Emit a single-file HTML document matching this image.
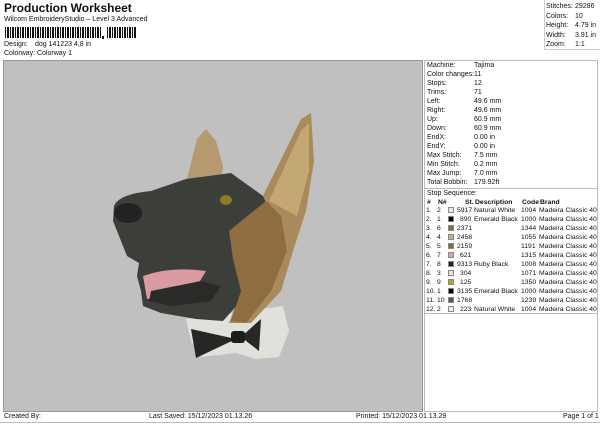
<!DOCTYPE html>
<html><head><style>
*{margin:0;padding:0;box-sizing:border-box}
body{width:600px;height:424px;background:#fff;font-family:"Liberation Sans",sans-serif;font-size:7px;color:#111;position:relative;overflow:hidden}
.a{position:absolute;white-space:nowrap}
#gray{position:absolute;left:3px;top:60px;width:420px;height:352px;background:#c0c0c0;border:1px solid #999}
#rp{position:absolute;left:424px;top:60px;width:174px;height:352px;border:1px solid #bbb;background:#fff}
.r{position:absolute;left:2px;height:9px;line-height:9px;white-space:nowrap;width:170px}
.v{position:absolute;left:47px;white-space:nowrap}
.sw{display:inline-block;width:6px;height:6px;position:absolute;top:1px;border:1px solid #888}
.t{font-size:6.8px}
</style></head><body>
<div class="a" style="left:4px;top:1px;font-size:12px;font-weight:bold">Production Worksheet</div>
<div class="a" style="left:4px;top:16px;font-size:7px">Wilcom EmbroideryStudio – Level 3 Advanced</div>
<svg class="a" style="left:5px;top:27px" width="135" height="12">
<g fill="#111">
<rect x="0" y="0" width="1" height="11"/><rect x="2" y="0" width="2" height="11"/><rect x="5" y="0" width="1" height="11"/><rect x="7" y="0" width="2" height="11"/><rect x="10" y="0" width="1" height="11"/><rect x="12" y="0" width="2" height="11"/><rect x="15" y="0" width="1" height="11"/><rect x="17" y="0" width="2" height="11"/><rect x="20" y="0" width="1" height="11"/><rect x="22" y="0" width="2" height="11"/><rect x="25" y="0" width="1" height="11"/><rect x="27" y="0" width="2" height="11"/><rect x="30" y="0" width="1" height="11"/><rect x="32" y="0" width="2" height="11"/><rect x="35" y="0" width="1" height="11"/><rect x="37" y="0" width="2" height="11"/><rect x="40" y="0" width="1" height="11"/><rect x="42" y="0" width="2" height="11"/><rect x="45" y="0" width="1" height="11"/><rect x="47" y="0" width="2" height="11"/><rect x="50" y="0" width="1" height="11"/><rect x="52" y="0" width="2" height="11"/><rect x="55" y="0" width="1" height="11"/><rect x="57" y="0" width="2" height="11"/><rect x="60" y="0" width="1" height="11"/><rect x="62" y="0" width="2" height="11"/><rect x="65" y="0" width="1" height="11"/><rect x="67" y="0" width="2" height="11"/><rect x="70" y="0" width="1" height="11"/><rect x="72" y="0" width="2" height="11"/><rect x="75" y="0" width="1" height="11"/><rect x="77" y="0" width="2" height="11"/><rect x="80" y="0" width="1" height="11"/><rect x="82" y="0" width="2" height="11"/><rect x="85" y="0" width="1" height="11"/><rect x="87" y="0" width="2" height="11"/><rect x="90" y="0" width="1" height="11"/><rect x="92" y="0" width="2" height="11"/><rect x="95" y="0" width="1" height="11"/><rect x="97" y="9" width="2" height="3"/><rect x="102" y="0" width="1" height="11"/><rect x="104" y="0" width="2" height="11"/><rect x="107" y="0" width="1" height="11"/><rect x="109" y="0" width="2" height="11"/><rect x="112" y="0" width="1" height="11"/><rect x="114" y="0" width="2" height="11"/><rect x="117" y="0" width="1" height="11"/><rect x="119" y="0" width="2" height="11"/><rect x="122" y="0" width="1" height="11"/><rect x="124" y="0" width="2" height="11"/><rect x="127" y="0" width="1" height="11"/><rect x="129" y="0" width="2" height="11"/></g></svg>
<div class="a" style="left:4px;top:41px">Design:</div><div class="a" style="left:35px;top:41px">dog 141223 4,8 in</div>
<div class="a" style="left:4px;top:50px">Colorway:</div><div class="a" style="left:37px;top:50px">Colorway 1</div>
<div class="a" style="left:544px;top:0;width:56px;height:50px;border-left:1px solid #ccc;border-bottom:1px solid #ccc"></div>
<div class="a" style="left:546px;top:2px;line-height:9.5px">Stitches:<br>Colors:<br>Height:<br>Width:<br>Zoom:</div>
<div class="a" style="left:575px;top:2px;line-height:9.5px">29286<br>10<br>4.79 in<br>3.91 in<br>1:1</div>
<div id="gray">
<svg width="420" height="352" viewBox="3 60 420 352" style="position:absolute;left:0;top:0">
<path d="M185 318 L282 305 L288 330 L278 356 L255 358 L235 352 L200 356 L190 340Z" fill="#dfe2da"/>
<path d="M262 195 L300 118 L310 112 L313 160 L305 210 L292 250 L280 290 L250 322 L228 322 L240 290Z" fill="#a98a5a"/>
<path d="M268 200 L300 130 L308 122 L308 170 L296 215Z" fill="#c4a874"/>
<path d="M186 178 L196 138 L205 128 L215 140 L222 165 L220 182Z" fill="#b49a6e"/>
<path d="M113 205 Q118 193 150 190 L185 178 L230 172 L262 195 L275 225 L262 250 L250 280 L240 300 L222 320 L195 318 L160 312 L142 305 L140 290 L136 275 L138 262 L126 255 L118 235 L112 220Z" fill="#3c3e3a"/>
<path d="M228 230 L265 200 L280 215 L286 250 L270 290 L245 322 L230 320 L240 290 L232 258Z" fill="#8f6d40"/>
<ellipse cx="127" cy="212" rx="14" ry="10" fill="#222"/>
<ellipse cx="225" cy="199" rx="6" ry="5" fill="#8b7b2a"/>
<path d="M142 275 Q170 265 205 270 L196 285 Q170 295 146 298Z" fill="#d99aa2"/>
<path d="M150 290 L200 280 L220 285 L210 300 L170 305 L148 300Z" fill="#2a2b28"/>
<path d="M190 328 L235 338 L195 357Z M260 318 L240 336 L258 350Z" fill="#272826"/>
<rect x="230" y="330" width="14" height="12" rx="3" fill="#1d1e1c"/>
</svg>
</div>
<div id="rp">
<div class="r" style="top:0">Machine:<span class="v">Tajima</span></div>
<div class="r" style="top:9px">Color changes:<span class="v">11</span></div>
<div class="r" style="top:18px">Stops:<span class="v">12</span></div>
<div class="r" style="top:27px">Trims:<span class="v">71</span></div>
<div class="r" style="top:36px">Left:<span class="v">49.6 mm</span></div>
<div class="r" style="top:45px">Right:<span class="v">49.6 mm</span></div>
<div class="r" style="top:54px">Up:<span class="v">60.9 mm</span></div>
<div class="r" style="top:63px">Down:<span class="v">60.9 mm</span></div>
<div class="r" style="top:72px">EndX:<span class="v">0.00 in</span></div>
<div class="r" style="top:81px">EndY:<span class="v">0.00 in</span></div>
<div class="r" style="top:90px">Max Stitch:<span class="v">7.5 mm</span></div>
<div class="r" style="top:99px">Min Stitch:<span class="v">0.2 mm</span></div>
<div class="r" style="top:108px">Max Jump:<span class="v">7.0 mm</span></div>
<div class="r" style="top:117px">Total Bobbin:<span class="v">179.92ft</span></div>
<div style="position:absolute;left:0;top:127px;width:172px;border-top:1px solid #bbb"></div>
<div class="r" style="top:128px">Stop Sequence:</div>
<div class="r t" style="top:137px;font-weight:bold;text-decoration:underline"><span class="a" style="left:0">#</span><span class="a" style="left:11px">N#</span><span class="a" style="left:38px">St.</span><span class="a" style="left:48px">Description</span><span class="a" style="left:95px">Code</span><span class="a" style="left:113px">Brand</span></div>
<div style="position:absolute;left:0;top:252px;width:172px;border-top:1px solid #bbb"></div>
</div>
<div class="a" style="left:4px;top:413px">Created By:</div>
<div class="a" style="left:149px;top:413px">Last Saved: 15/12/2023 01.13.26</div>
<div class="a" style="left:356px;top:413px">Printed: 15/12/2023 01.13.29</div>
<div class="a" style="left:563px;top:413px">Page 1 of 1</div>
<div class="a" style="left:0;top:422px;width:600px;border-top:1px solid #bbb"></div>
<div class="t" style="position:absolute;left:426px;top:206px;width:172px">
<div class="r" style="left:0;top:0"><span class="a" style="left:0">1.</span><span class="a" style="left:11px">2</span><i class="sw" style="left:22px;background:#ececec"></i><span class="a" style="left:31px">5917</span><span class="a" style="left:48px">Natural White</span><span class="a" style="left:95px">1004</span><span class="a" style="left:113px">Madeira Classic 40</span></div>
<div class="r" style="left:0;top:9px"><span class="a" style="left:0">2.</span><span class="a" style="left:11px">1</span><i class="sw" style="left:22px;background:#000"></i><span class="a" style="left:34px">890</span><span class="a" style="left:48px">Emerald Black</span><span class="a" style="left:95px">1000</span><span class="a" style="left:113px">Madeira Classic 40</span></div>
<div class="r" style="left:0;top:18px"><span class="a" style="left:0">3.</span><span class="a" style="left:11px">6</span><i class="sw" style="left:22px;background:#8a6548"></i><span class="a" style="left:31px">2371</span><span class="a" style="left:95px">1344</span><span class="a" style="left:113px">Madeira Classic 40</span></div>
<div class="r" style="left:0;top:27px"><span class="a" style="left:0">4.</span><span class="a" style="left:11px">4</span><i class="sw" style="left:22px;background:#d8aa84"></i><span class="a" style="left:31px">2458</span><span class="a" style="left:95px">1055</span><span class="a" style="left:113px">Madeira Classic 40</span></div>
<div class="r" style="left:0;top:36px"><span class="a" style="left:0">5.</span><span class="a" style="left:11px">5</span><i class="sw" style="left:22px;background:#8d6a2d"></i><span class="a" style="left:31px">2159</span><span class="a" style="left:95px">1191</span><span class="a" style="left:113px">Madeira Classic 40</span></div>
<div class="r" style="left:0;top:45px"><span class="a" style="left:0">6.</span><span class="a" style="left:11px">7</span><i class="sw" style="left:22px;background:#e3a0ad"></i><span class="a" style="left:34px">621</span><span class="a" style="left:95px">1315</span><span class="a" style="left:113px">Madeira Classic 40</span></div>
<div class="r" style="left:0;top:54px"><span class="a" style="left:0">7.</span><span class="a" style="left:11px">8</span><i class="sw" style="left:22px;background:#222"></i><span class="a" style="left:31px">9313</span><span class="a" style="left:48px">Ruby Black</span><span class="a" style="left:95px">1008</span><span class="a" style="left:113px">Madeira Classic 40</span></div>
<div class="r" style="left:0;top:63px"><span class="a" style="left:0">8.</span><span class="a" style="left:11px">3</span><i class="sw" style="left:22px;background:#e6e3da"></i><span class="a" style="left:34px">304</span><span class="a" style="left:95px">1071</span><span class="a" style="left:113px">Madeira Classic 40</span></div>
<div class="r" style="left:0;top:72px"><span class="a" style="left:0">9.</span><span class="a" style="left:11px">9</span><i class="sw" style="left:22px;background:#b9a030"></i><span class="a" style="left:34px">125</span><span class="a" style="left:95px">1350</span><span class="a" style="left:113px">Madeira Classic 40</span></div>
<div class="r" style="left:0;top:81px"><span class="a" style="left:0">10.</span><span class="a" style="left:11px">1</span><i class="sw" style="left:22px;background:#000"></i><span class="a" style="left:31px">3135</span><span class="a" style="left:48px">Emerald Black</span><span class="a" style="left:95px">1000</span><span class="a" style="left:113px">Madeira Classic 40</span></div>
<div class="r" style="left:0;top:90px"><span class="a" style="left:0">11.</span><span class="a" style="left:11px">10</span><i class="sw" style="left:22px;background:#555"></i><span class="a" style="left:31px">1768</span><span class="a" style="left:95px">1239</span><span class="a" style="left:113px">Madeira Classic 40</span></div>
<div class="r" style="left:0;top:99px"><span class="a" style="left:0">12.</span><span class="a" style="left:11px">2</span><i class="sw" style="left:22px;background:#ececec"></i><span class="a" style="left:34px">223</span><span class="a" style="left:48px">Natural White</span><span class="a" style="left:95px">1004</span><span class="a" style="left:113px">Madeira Classic 40</span></div>
</div>
</body></html>
